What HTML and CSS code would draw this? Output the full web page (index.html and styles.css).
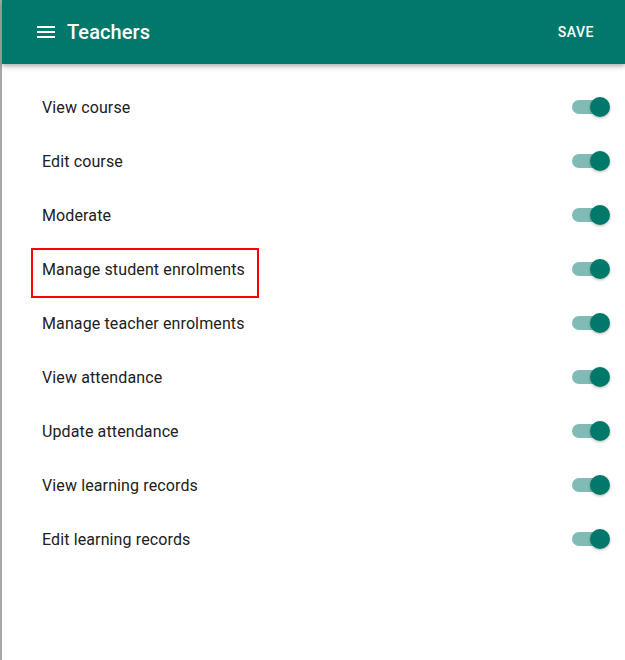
FILE: index.html
```html
<!DOCTYPE html>
<html>
<head>
<meta charset="utf-8">
<link rel="stylesheet" href="styles.css">
</head>
<body>
<div class="dialog">
  <header class="toolbar">
    <div class="toolbar-left">
      <svg class="menu-icon" width="24" height="24" viewBox="0 0 24 24"><path d="M3 18h18v-2H3v2zm0-5h18v-2H3v2zm0-7v2h18V6H3z" fill="#fff"/></svg>
      <span class="title">Teachers</span>
    </div>
    <span class="save">SAVE</span>
  </header>
  <ul class="list">
    <li class="row"><span class="label">View course</span><span class="switch"><span class="track"></span><span class="thumb"></span></span></li>
    <li class="row"><span class="label">Edit course</span><span class="switch"><span class="track"></span><span class="thumb"></span></span></li>
    <li class="row"><span class="label">Moderate</span><span class="switch"><span class="track"></span><span class="thumb"></span></span></li>
    <li class="row"><span class="label highlighted">Manage student enrolments</span><span class="switch"><span class="track"></span><span class="thumb"></span></span></li>
    <li class="row"><span class="label">Manage teacher enrolments</span><span class="switch"><span class="track"></span><span class="thumb"></span></span></li>
    <li class="row"><span class="label">View attendance</span><span class="switch"><span class="track"></span><span class="thumb"></span></span></li>
    <li class="row"><span class="label">Update attendance</span><span class="switch"><span class="track"></span><span class="thumb"></span></span></li>
    <li class="row"><span class="label">View learning records</span><span class="switch"><span class="track"></span><span class="thumb"></span></span></li>
    <li class="row"><span class="label">Edit learning records</span><span class="switch"><span class="track"></span><span class="thumb"></span></span></li>
  </ul>
</div>
</body>
</html>
```
FILE: styles.css
```css
html, body {
  margin: 0;
  padding: 0;
  background: #fff;
}
body {
  font-family: Roboto, "Liberation Sans", sans-serif;
  width: 625px;
  height: 660px;
  overflow: hidden;
}
.dialog {
  height: 660px;
  border-left: 2px solid #a8a8a8;
  box-sizing: border-box;
  background: #fff;
}
.toolbar {
  height: 64px;
  background: #00796b;
  display: flex;
  align-items: center;
  justify-content: space-between;
  padding: 0 31px 0 32px;
  box-shadow: 0 2px 4px rgba(0,0,0,0.25), 0 4px 6px rgba(0,0,0,0.08);
  position: relative;
  z-index: 1;
}
.toolbar-left {
  display: flex;
  align-items: center;
}
.menu-icon {
  display: block;
  margin-right: 9px;
}
.title {
  color: #fff;
  font-size: 20px;
  font-weight: 500;
  letter-spacing: 0.1px;
}
.save {
  color: #fff;
  font-size: 14px;
  font-weight: 500;
  letter-spacing: 0.5px;
}
.list {
  list-style: none;
  margin: 0;
  padding: 17px 0 0 0;
}
.row {
  height: 54px;
  display: flex;
  align-items: center;
  justify-content: space-between;
  padding: 0 15px 0 40px;
}
.label {
  font-size: 16px;
  color: #212121;
  line-height: 20px;
  letter-spacing: 0.12px;
}
.label.highlighted {
  outline: 2px solid #ff0000;
  outline-offset: 0;
  padding: 10px 12px 16px 9px;
  margin: 3px 0 -3px -9px;
}
.switch {
  position: relative;
  width: 38px;
  height: 20px;
  display: block;
  margin-top: -2px;
}
.track {
  position: absolute;
  left: 0;
  top: 3px;
  width: 34px;
  height: 14px;
  border-radius: 7px;
  background: #80bcb5;
}
.thumb {
  position: absolute;
  right: 0;
  top: 0;
  width: 20px;
  height: 20px;
  border-radius: 50%;
  background: #00796b;
  box-shadow: 0 1px 3px rgba(0,0,0,0.3);
}
```
